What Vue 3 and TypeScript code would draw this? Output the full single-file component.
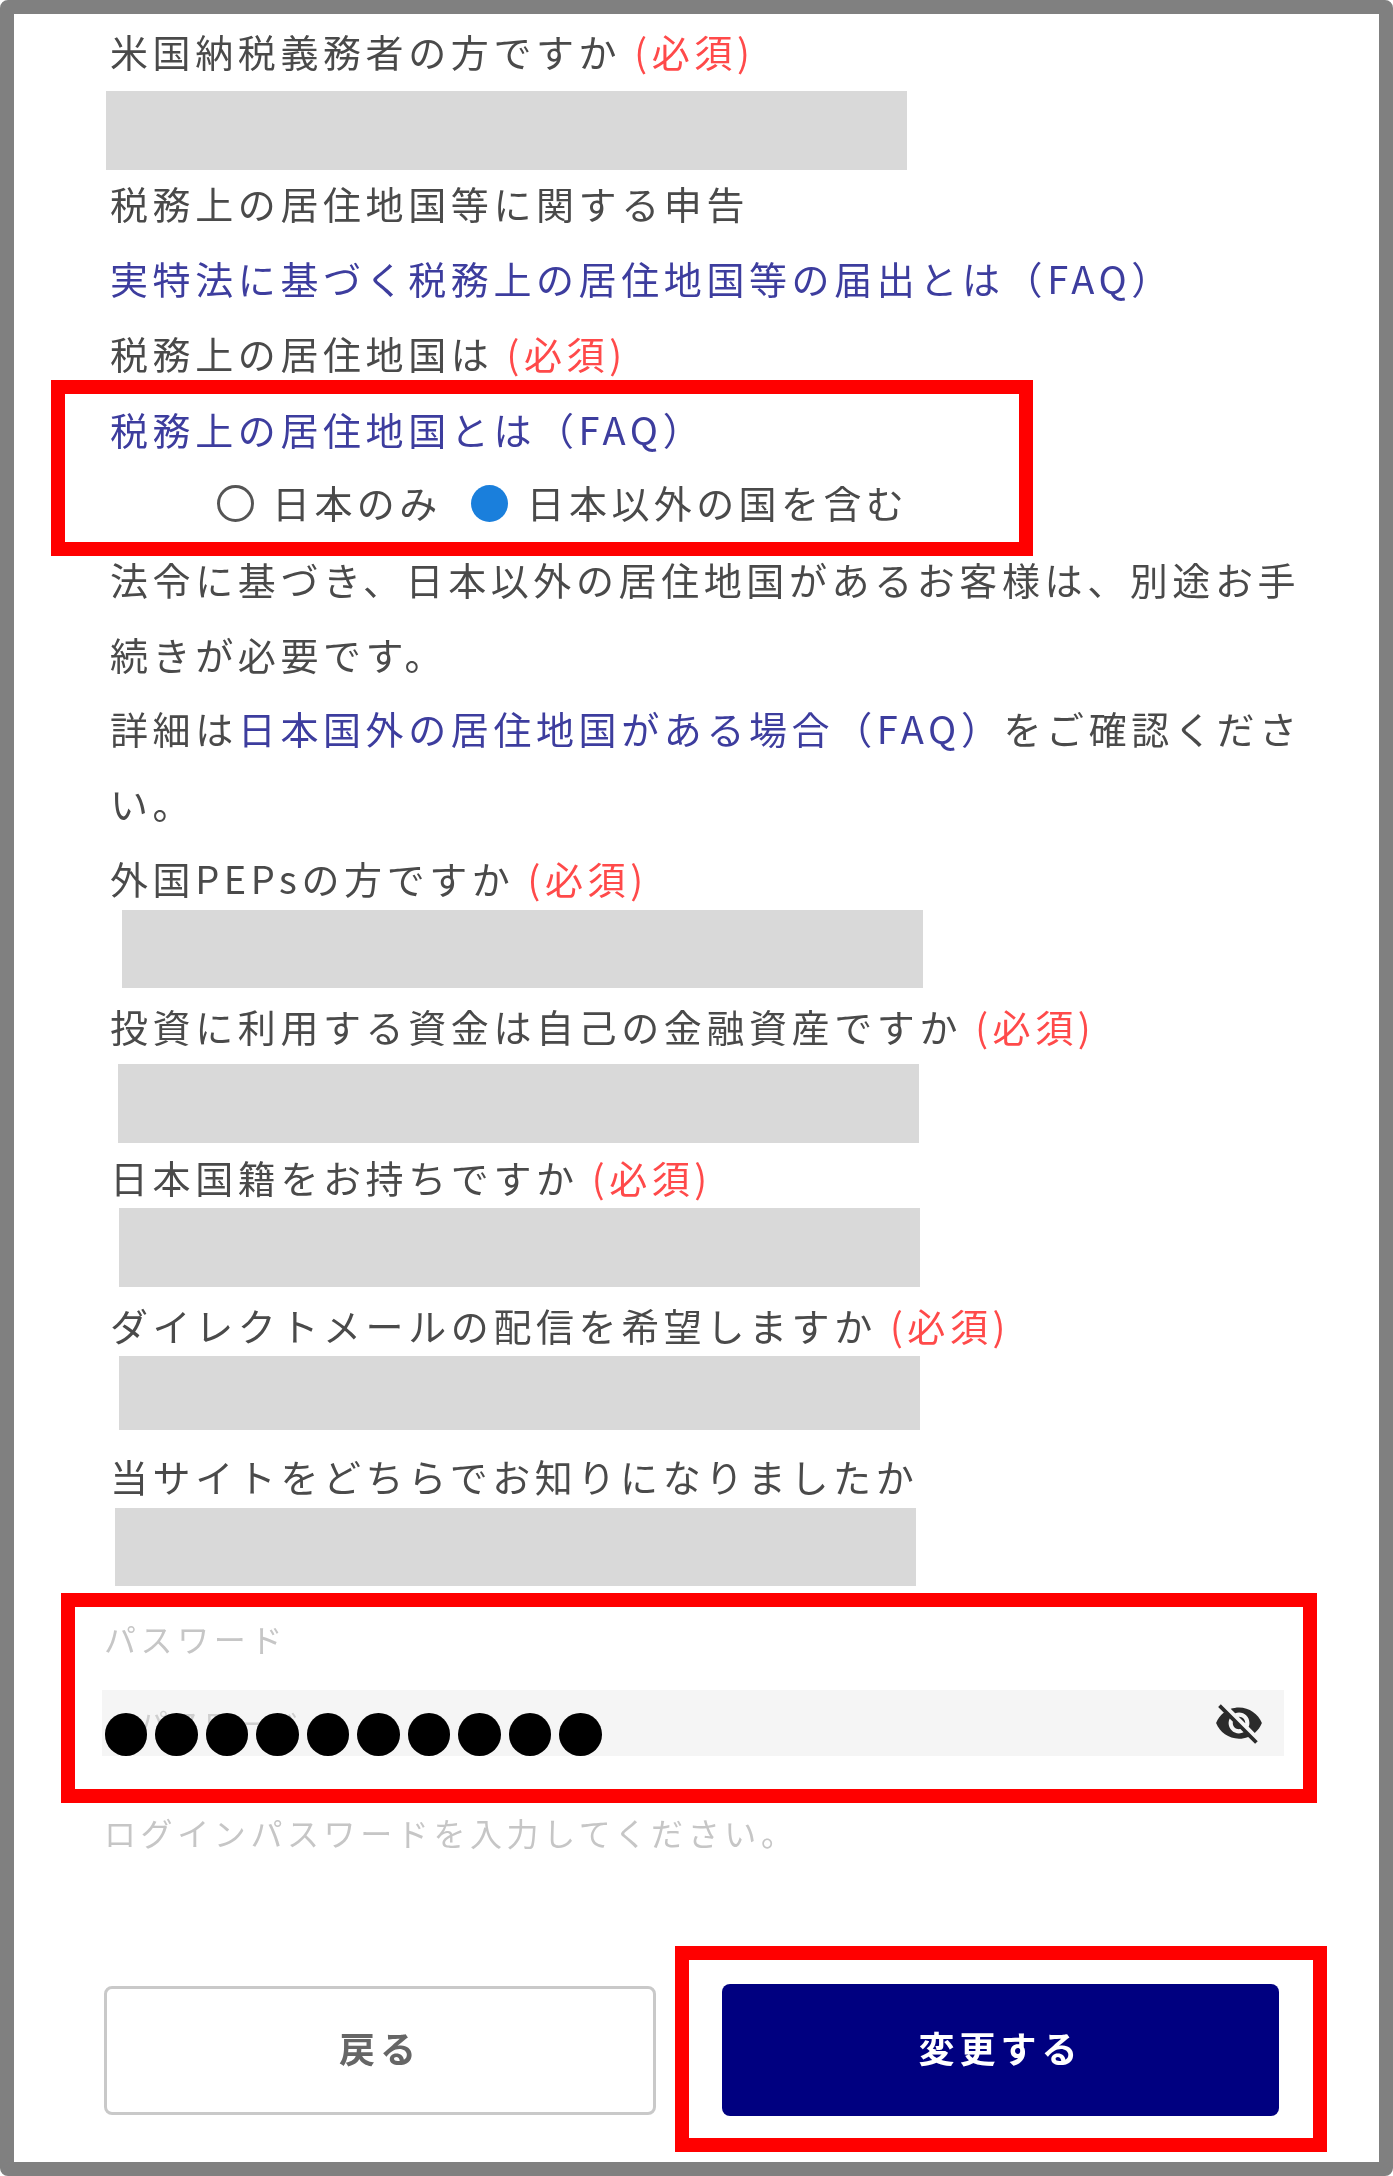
<script setup lang="ts">
const dots: number[] = Array.from({ length: 10 }, (_, i) => i)
</script>

<template>
  <main class="frame">
    <p class="label first">米国納税義務者の方ですか <span class="req">(必須)</span></p>
    <div class="mask mask-a"></div>

    <div class="notes">
      <p class="label">税務上の居住地国等に関する申告</p>
      <p class="label link">実特法に基づく税務上の居住地国等の届出とは（FAQ）</p>
      <p class="label">税務上の居住地国は <span class="req">(必須)</span></p>
      <p class="label link">税務上の居住地国とは（FAQ）</p>
      <div class="radios">
        <span class="radio"></span>
        <span class="radio-text">日本のみ</span>
        <span class="radio on"></span>
        <span class="radio-text">日本以外の国を含む</span>
      </div>
    </div>

    <div class="para">
      <p>法令に基づき、日本以外の居住地国があるお客様は、別途お手続きが必要です。</p>
      <p>詳細は<span class="link">日本国外の居住地国がある場合（FAQ）</span>をご確認ください。</p>
    </div>

    <p class="label after-para">外国PEPsの方ですか <span class="req">(必須)</span></p>
    <div class="mask mask-b"></div>
    <p class="label after-mask">投資に利用する資金は自己の金融資産ですか <span class="req">(必須)</span></p>
    <div class="mask mask-c"></div>
    <p class="label after-mask-c">日本国籍をお持ちですか <span class="req">(必須)</span></p>
    <div class="mask mask-d"></div>
    <p class="label after-mask-d">ダイレクトメールの配信を希望しますか <span class="req">(必須)</span></p>
    <div class="mask mask-e"></div>
    <p class="label after-mask-e">当サイトをどちらでお知りになりましたか</p>
    <div class="mask mask-f"></div>

    <p class="field-label">パスワード</p>
    <div class="input">
      <span class="placeholder">パスワード</span>
      <svg class="eye" viewBox="0 0 24 24" aria-hidden="true">
        <path d="M12 7c2.76 0 5 2.24 5 5 0 .65-.13 1.26-.36 1.83l2.92 2.92c1.51-1.26 2.7-2.89 3.43-4.75-1.73-4.39-6-7.5-11-7.5-1.4 0-2.74.25-3.98.7l2.16 2.16C10.74 7.13 11.35 7 12 7zM2 4.27l2.28 2.28.46.46C3.08 8.3 1.78 10.02 1 12c1.73 4.39 6 7.5 11 7.5 1.55 0 3.03-.3 4.38-.84l.42.42L19.73 22 21 20.73 3.27 3 2 4.27zM7.53 9.8l1.55 1.55c-.05.21-.08.43-.08.65 0 1.66 1.34 3 3 3 .22 0 .44-.03.65-.08l1.55 1.55c-.67.33-1.41.53-2.2.53-2.76 0-5-2.24-5-5 0-.79.2-1.53.53-2.2zm4.31-.78l3.15 3.15.02-.16c0-1.66-1.34-3-3-3l-.17.01z" />
      </svg>
      <div class="dots">
        <span v-for="d in dots" :key="d" class="dot"></span>
      </div>
    </div>
    <p class="hint">ログインパスワードを入力してください。</p>

    <div class="actions">
      <button class="btn back" type="button"><span>戻る</span></button>
      <button class="btn submit" type="button"><span>変更する</span></button>
    </div>

    <div class="mark mark-radio"></div>
    <div class="mark mark-password"></div>
    <div class="mark mark-submit"></div>
  </main>
</template>

<style>
html,
body {
  margin: 0;
  background: #fff;
}
</style>

<style scoped>
.frame {
  position: relative;
  box-sizing: border-box;
  width: 1393px;
  height: 2176px;
  border: 14px solid #808080;
  border-radius: 8px;
  background: #fff;
  overflow: hidden;
  font-family: "Noto Sans CJK JP", "Noto Sans", sans-serif;
  color: #4a4a4a;
  display: flex;
  flex-direction: column;
  align-items: flex-start;
}

p {
  margin: 0;
}

.label,
.para {
  font-size: 38px;
  letter-spacing: 4.6px;
  white-space: nowrap;
  filter: blur(0.7px);
}

.label {
  height: 60px;
  line-height: 55px;
  padding-left: 96px;
}

.label.first {
  margin-top: 9px;
}

.link {
  color: #3d3d9e;
}

.req {
  color: #ff4a4a;
}

.mask {
  width: 801px;
  height: 79px;
  background: #d9d9d9;
  flex: none;
}

.mask-a {
  margin: 8px 0 0 92px;
}

.mask-b {
  margin-left: 108px;
  height: 78px;
}

.mask-c {
  margin: 6px 0 0 104px;
}

.mask-d {
  margin: -1px 0 0 105px;
}

.mask-e {
  margin: -1px 0 0 105px;
  height: 74px;
}

.mask-f {
  margin: 0 0 0 101px;
  height: 78px;
}

.after-mask {
  margin-top: 10px;
}

.after-mask-c {
  margin-top: 6px;
}

.after-mask-d {
  margin-top: 10px;
}

.after-mask-e {
  margin-top: 18px;
}

.notes {
  margin-top: 5px;
  display: flex;
  flex-direction: column;
  gap: 15.2px;
}

.radios {
  height: 60px;
  padding-left: 203px;
  display: flex;
  align-items: center;
  font-size: 38px;
  letter-spacing: 4.4px;
  filter: blur(0.7px);
}

.radio {
  box-sizing: border-box;
  width: 37px;
  height: 37px;
  border: 3px solid #555;
  border-radius: 50%;
  margin-top: -4px;
  flex: none;
}

.radio.on {
  border: none;
  background: #1a7fdc;
}

.radio-text {
  margin: -8px 29px 0 18px;
}

.radio.on + .radio-text {
  margin-left: 19px;
}

.para {
  box-sizing: border-box;
  width: 1320px;
  margin-top: 6.3px;
  padding-left: 96px;
  line-height: 74.6px;
  white-space: normal;
  line-break: strict;
}

.after-para {
  margin-top: 10px;
}

.field-label,
.hint {
  padding-left: 90px;
  height: 60px;
  line-height: 55px;
  font-size: 32px;
  letter-spacing: 4.6px;
  color: #c6c6c6;
  white-space: nowrap;
  filter: blur(0.7px);
}

.field-label {
  margin-top: 25px;
}

.input {
  position: relative;
  box-sizing: border-box;
  flex: none;
  width: 1182px;
  height: 66px;
  margin: 19px 0 0 88px;
  background: #f5f5f5;
}

.placeholder {
  position: absolute;
  left: 36px;
  top: 7px;
  font-size: 30px;
  line-height: 50px;
  letter-spacing: 3px;
  color: #cfcfcf;
  filter: blur(0.7px);
}

.eye {
  position: absolute;
  left: 1112px;
  top: 8px;
  width: 50px;
  height: 50px;
  fill: #2b2b2b;
  filter: blur(0.7px);
}

.dots {
  position: absolute;
  left: 2.7px;
  top: 23px;
  display: flex;
  gap: 7.8px;
}

.dot {
  width: 42.7px;
  height: 42.7px;
  border-radius: 50%;
  background: #000;
}

.hint {
  margin-top: 49px;
}

.actions {
  margin: 119px 0 0 90px;
  display: flex;
  align-items: center;
  gap: 66px;
}

.btn {
  box-sizing: border-box;
  height: 129px;
  border-radius: 8px;
  font-family: inherit;
  font-size: 36px;
  font-weight: 700;
  letter-spacing: 5px;
  padding: 0 0 6px;
}

.btn span {
  display: inline-block;
  filter: blur(0.6px);
}

.back {
  width: 552px;
  border: 3px solid #c9c9c9;
  background: #fff;
  color: #666;
}

.submit {
  width: 557px;
  height: 132px;
  border: none;
  background: #000080;
  color: #fff;
}

.mark {
  position: absolute;
  box-sizing: border-box;
  border: 14px solid #ff0000;
  pointer-events: none;
}

.mark-radio {
  left: 37px;
  top: 366px;
  width: 982px;
  height: 176px;
}

.mark-password {
  left: 47px;
  top: 1579px;
  width: 1256px;
  height: 210px;
}

.mark-submit {
  left: 661px;
  top: 1932px;
  width: 652px;
  height: 206px;
}
</style>
